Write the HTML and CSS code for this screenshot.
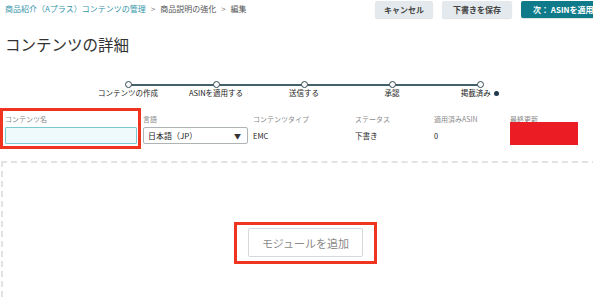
FILE: index.html
```html
<!DOCTYPE html>
<html lang="ja">
<head>
<meta charset="utf-8">
<link rel="stylesheet" href="styles.css">
</head>
<body>
<div class="page">
  <div class="topbar">
    <div class="crumbs"><span class="crumb-link">商品紹介（Aプラス）コンテンツの管理</span><span class="sep">&gt;</span><span>商品説明の強化</span><span class="sep">&gt;</span><span>編集</span></div>
    <div class="actions">
      <button class="btn btn-cancel">キャンセル</button>
      <button class="btn btn-save">下書きを保存</button>
      <button class="btn btn-primary">次： ASINを適用</button>
    </div>
  </div>
  <h1 class="title">コンテンツの詳細</h1>
  <div class="stepper">
    <div class="step"><span class="dot"></span><span class="step-label">コンテンツの作成</span></div>
    <div class="step"><span class="dot"></span><span class="step-label">ASINを適用する</span></div>
    <div class="step"><span class="dot"></span><span class="step-label">送信する</span></div>
    <div class="step"><span class="dot"></span><span class="step-label">承認</span></div>
    <div class="step"><span class="dot"></span><span class="step-label">掲載済み <span class="info"></span></span></div>
  </div>
  <div class="fields">
    <div class="field field-name">
      <div class="label">コンテンツ名</div>
      <div class="input"></div>
    </div>
    <div class="field field-lang">
      <div class="label">言語</div>
      <div class="select"><span>日本語（JP）</span><span class="arrow">▼</span></div>
    </div>
    <div class="field field-type">
      <div class="label">コンテンツタイプ</div>
      <div class="value">EMC</div>
    </div>
    <div class="field field-status">
      <div class="label">ステータス</div>
      <div class="value">下書き</div>
    </div>
    <div class="field field-asin">
      <div class="label">適用済みASIN</div>
      <div class="value">0</div>
    </div>
    <div class="field field-updated">
      <div class="label">最終更新</div>
      <div class="redact"></div>
    </div>
  </div>
  <div class="canvas">
    <div class="highlight">
      <button class="module-btn">モジュールを追加</button>
    </div>
  </div>
</div>
</body>
</html>
```

FILE: styles.css
```css
html, body {
  margin: 0;
  padding: 0;
  background: #ffffff;
}
body {
  width: 593px;
  height: 297px;
  overflow: hidden;
  font-family: "Noto Sans CJK JP", "Noto Sans", sans-serif;
  color: #222;
}
.page {
  width: 593px;
  height: 297px;
  overflow: hidden;
}
.topbar {
  display: flex;
  justify-content: space-between;
  align-items: flex-start;
  height: 18px;
}
.crumbs {
  padding: 3px 0 0 5px;
  font-size: 8px;
  line-height: 11px;
  color: #555;
  white-space: nowrap;
}
.crumb-link {
  color: #3596aa;
}
.sep {
  margin: 0 5px;
  color: #777;
}
.actions {
  display: flex;
  gap: 9px;
  margin-top: 1px;
  margin-right: -14px;
}
.btn {
  height: 17px;
  border: none;
  border-radius: 2px;
  font-family: inherit;
  font-size: 8px;
  font-weight: 700;
  padding: 0;
  box-shadow: 0 1px 1px rgba(0,0,0,0.12);
  white-space: nowrap;
}
.btn-cancel {
  width: 58px;
  background: #e3e9ec;
  color: #444;
}
.btn-save {
  width: 70px;
  background: #e3e9ec;
  color: #444;
}
.btn-primary {
  width: 86px;
  background: #0f7b8a;
  color: #fff;
  text-align: left;
  padding-left: 12px;
}
.title {
  margin: 16px 0 0 5px;
  font-size: 15.5px;
  line-height: 20px;
  font-weight: 400;
  color: #333;
}
.stepper {
  display: flex;
  margin: 27px 0 0 84px;
}
.step {
  position: relative;
  width: 88px;
  display: flex;
  flex-direction: column;
  align-items: center;
}
.step::before,
.step::after {
  content: "";
  position: absolute;
  top: 3px;
  height: 1.5px;
  background: #46606a;
}
.step::before {
  left: 0;
  right: 50%;
}
.step::after {
  left: 50%;
  right: 0;
}
.step:first-child::before,
.step:last-child::after {
  display: none;
}
.dot {
  position: relative;
  z-index: 1;
  box-sizing: border-box;
  width: 7px;
  height: 7px;
  border: 1.5px solid #2f4a55;
  border-radius: 50%;
  background: #fff;
}
.step-label {
  font-size: 7.5px;
  line-height: 9px;
  color: #222;
  white-space: nowrap;
}
.info {
  display: inline-block;
  width: 5px;
  height: 5px;
  border-radius: 50%;
  background: #1f3a4a;
  margin-left: 2px;
  vertical-align: 0;
}
.fields {
  display: flex;
  align-items: flex-start;
  margin-top: 11px;
}
.field {
  position: relative;
  box-sizing: border-box;
  padding-top: 6px;
}
.label {
  font-size: 7px;
  line-height: 10px;
  color: #8a8a8a;
  white-space: nowrap;
}
.field-name {
  width: 141px;
  border: 3px solid #ef3420;
  padding: 3px 2px 2px 2px;
}
.input {
  box-sizing: border-box;
  margin-top: 3px;
  height: 17px;
  width: 132px;
  background: #effafc;
  border: 1px solid #7cc9d6;
  border-radius: 1px;
}
.field-lang {
  width: 110px;
  margin-left: 2px;
}
.select {
  box-sizing: border-box;
  margin-top: 3px;
  width: 105px;
  height: 17px;
  border: 1px solid #aeb4b6;
  border-radius: 2px;
  display: flex;
  justify-content: space-between;
  align-items: center;
  padding: 0 6px 0 4px;
  font-size: 8px;
  color: #222;
}
.arrow {
  font-size: 7px;
  color: #333;
}
.field-type { width: 102px; }
.field-status { width: 79px; }
.field-asin { width: 76px; }
.field-updated { flex: 1; }
.value {
  margin-top: 3px;
  height: 17px;
  line-height: 17px;
  font-size: 7.5px;
  color: #222;
}
.redact {
  position: absolute;
  left: 0;
  top: 14px;
  width: 68px;
  height: 23px;
  background: #ec1c24;
}
.canvas {
  box-sizing: border-box;
  width: 607px;
  height: 136px;
  margin: 12px 0 0 1px;
  border-top: 2px dashed #e3e3e3;
  border-left: 2px dashed #e3e3e3;
  padding-top: 59px;
  display: flex;
  justify-content: center;
  align-items: flex-start;
}
.highlight {
  border: 3px solid #ef3420;
  padding: 3px 11px 4px 11px;
  display: flex;
}
.module-btn {
  width: 115px;
  height: 29px;
  background: #fff;
  border: 1px solid #d5d9da;
  border-radius: 2px;
  font-family: inherit;
  font-size: 11px;
  color: #8a8a8a;
  padding: 0;
}
```
